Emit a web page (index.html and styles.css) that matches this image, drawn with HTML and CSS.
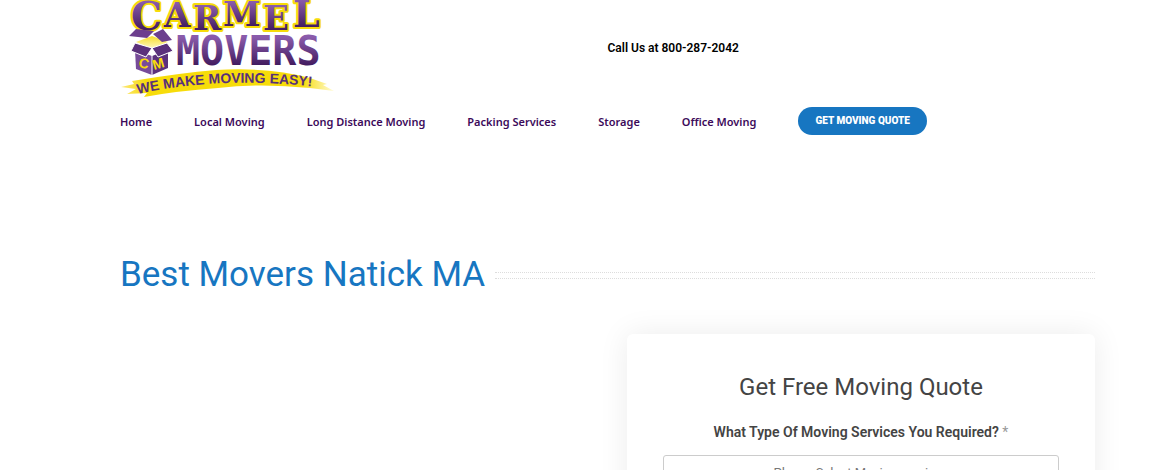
FILE: index.html
```html
<!DOCTYPE html>
<html lang="en">
<head>
    <meta charset="UTF-8">
    <meta name="viewport" content="width=device-width, initial-scale=1.0">
    <title>Best Movers Natick MA</title>
    <link rel="stylesheet" href="styles.css">
</head>
<body>

    <header class="site-header container">
        <div class="top-bar">
            <a href="#" class="logo" aria-label="Carmel Movers">
                <svg width="216" height="98" viewBox="0 0 216 98">
                    <defs>
                        <linearGradient id="purple" x1="0" y1="0" x2="0" y2="1">
                            <stop offset="0.2" stop-color="#8a5bab"/>
                            <stop offset="0.8" stop-color="#431c60"/>
                        </linearGradient>
                        <linearGradient id="gold" x1="0" y1="0" x2="0" y2="1">
                            <stop offset="0" stop-color="#f6dc28"/>
                            <stop offset="1" stop-color="#fff9c8"/>
                        </linearGradient>
                        <linearGradient id="ribbon">
                            <stop offset="0" stop-color="#fce77a"/>
                            <stop offset="0.12" stop-color="#f7dc0a"/>
                            <stop offset="0.85" stop-color="#f7dc0a"/>
                            <stop offset="1" stop-color="#fffbd8"/>
                        </linearGradient>
                        <path id="slogan" d="M18 94 Q102 75 206 88"/>
                    </defs>

                    <!-- name -->
                    <g class="logo-name">
                        <text class="big" x="11" y="30">C</text>
                        <text x="44" y="27">A</text>
                        <text x="73" y="30">R</text>
                        <text x="103" y="26">M</text>
                        <text x="143" y="30">E</text>
                        <text class="wide" x="173" y="27">L</text>
                    </g>
                    <text class="logo-movers" x="56" y="65">MOVERS</text>

                    <!-- open box -->
                    <path fill="#774b99" d="M15 50 32 56V75L16 69z"/>
                    <path fill="#5b317c" d="M32 56 48 50V68L32 75z"/>
                    <path fill="url(#gold)" d="M16 42 32 36 48 42 32 49z"/>
                    <path fill="#6c3e8e" d="M16 29 34 31 27 38 9 36zM33 34 43 29 52 40 42 42z"/>
                    <path fill="#5b317c" stroke="#fff" d="M15 43 32 48 26 57 11 51zM32 48 47 43 53 51 38 57z"/>
                    <path stroke="#fff" fill="none" d="M32 49V75"/>
                    <text class="box-letter" x="18" y="67" transform="rotate(12 18 67)">C</text>
                    <text class="box-letter" x="34" y="70" transform="rotate(-16 34 70)">M</text>

                    <!-- ribbon -->
                    <path fill="url(#ribbon)" d="M1 87 14 84 12 81Q60 73 96 70 150 67 190 78L207 84 203 85 214 91 190 88Q140 83 98 88 56 91 24 97L27 93 7 94 16 89z"/>
                    <text class="slogan"><textPath href="#slogan">WE MAKE MOVING EASY!</textPath></text>
                </svg>
            </a>
            <p class="phone">Call Us at 800-287-2042</p>
        </div>
        <nav class="main-nav">
            <a href="#">Home</a>
            <a href="#">Local Moving</a>
            <a href="#">Long Distance Moving</a>
            <a href="#">Packing Services</a>
            <a href="#">Storage</a>
            <a href="#">Office Moving</a>
            <a href="#quote" class="btn-quote">GET MOVING QUOTE</a>
        </nav>
    </header>

    <main class="container">
        <div class="page-title">
            <h1>Best Movers Natick MA</h1>
            <span class="title-sep"></span>
        </div>

        <form class="quote-form" id="quote">
            <h2>Get Free Moving Quote</h2>
            <label for="service">What Type Of Moving Services You Required? <span class="required">*</span></label>
            <select id="service" required>
                <option value="">Please Select Moving services</option>
                <option>Local Moving</option>
                <option>Long Distance Moving</option>
                <option>Packing Services</option>
                <option>Storage</option>
                <option>Office Moving</option>
            </select>
        </form>
    </main>

</body>
</html>
```

FILE: styles.css
```css
body {
    margin: 0;
    font-family: Roboto, "Liberation Sans", sans-serif;
    color: #444;
    background: #fff;
}
.container {
    max-width: 1100px;
    padding: 0 72px 0 120px;
}

/* Header */
.top-bar {
    display: grid;
    grid-template-columns: 1fr 1fr;
    align-items: center;
}
.logo svg {
    display: block;
}
.logo-name text {
    font-family: "DejaVu Serif", serif;
    font-weight: bold;
    font-size: 34px;
    fill: url(#purple);
    stroke: #f7dc0a;
    stroke-width: 4px;
    stroke-linejoin: round;
    paint-order: stroke;
}
.logo-name .big {
    font-size: 39px;
}
.logo-name .wide {
    font-size: 38px;
}
.logo-movers {
    font-family: "DejaVu Sans Mono", monospace;
    font-weight: bold;
    font-size: 40px;
    fill: url(#purple);
}
.box-letter {
    font-family: "Liberation Sans", sans-serif;
    font-weight: bold;
    font-size: 14px;
    fill: #f7dc0a;
}
.slogan {
    font-family: "Liberation Sans", sans-serif;
    font-weight: bold;
    font-size: 14px;
    fill: #58307a;
}
.phone {
    margin: 0;
    padding-bottom: 2px;
    font-size: 12px;
    font-weight: 600;
    color: #000;
}
.main-nav {
    display: flex;
    align-items: center;
    gap: 42px;
    padding-top: 9px;
}
.main-nav a {
    font-family: "Noto Sans", sans-serif;
    font-size: 11px;
    font-weight: 600;
    color: #3c0a5a;
    text-decoration: none;
    white-space: nowrap;
}
.main-nav .btn-quote {
    padding: 0 17px;
    border-radius: 14px;
    font-family: Roboto, sans-serif;
    font-size: 10px;
    font-weight: 900;
    line-height: 28px;
    color: #fff;
    background: #1776c1;
}

/* Title */
.page-title {
    display: flex;
    align-items: center;
    gap: 10px;
    margin-top: 116px;
}
.page-title h1 {
    margin: 0;
    font-size: 35px;
    font-weight: 400;
    line-height: 48px;
    color: #1776c1;
}
.title-sep {
    flex: 1;
    height: 5px;
    border-top: 1px dotted #ddd;
    border-bottom: 1px dotted #ddd;
}

/* Quote form */
.quote-form {
    box-sizing: border-box;
    width: 48%;
    margin: 35px 0 40px auto;
    padding: 36px;
    border-radius: 6px;
    text-align: center;
    background: #fff;
    box-shadow: 0 0 30px rgba(0, 0, 0, 0.08);
}
.quote-form h2 {
    margin: 0 0 19px;
    font-size: 24px;
    font-weight: 400;
    line-height: 34px;
}
.quote-form label {
    display: block;
    margin-bottom: 14px;
    font-size: 14px;
    font-weight: 600;
    line-height: 18px;
}
.required {
    font-weight: 400;
    color: #999;
}
.quote-form select {
    width: 100%;
    height: 35px;
    border: 1px solid #ccc;
    border-radius: 3px;
    font-family: inherit;
    font-size: 13px;
    text-align: center;
    text-align-last: center;
    color: #777;
    background: #fff;
    appearance: none;
}
```
